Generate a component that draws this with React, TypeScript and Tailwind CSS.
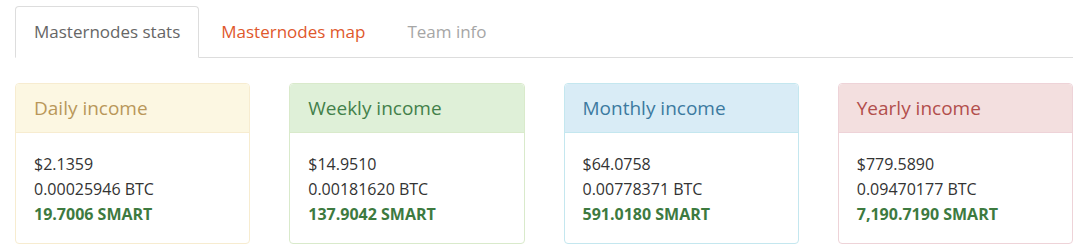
const panels = [
  {
    title: "Daily income",
    usd: "$2.1359",
    btc: "0.00025946 BTC",
    smart: "19.7006 SMART",
    border: "border-[#f7ecd0]",
    head: "bg-[#fcf7e2] text-[#b9975a] border-[#f7ecd0]",
  },
  {
    title: "Weekly income",
    usd: "$14.9510",
    btc: "0.00181620 BTC",
    smart: "137.9042 SMART",
    border: "border-[#d9eacb]",
    head: "bg-[#dff0d8] text-[#43804a] border-[#d9eacb]",
  },
  {
    title: "Monthly income",
    usd: "$64.0758",
    btc: "0.00778371 BTC",
    smart: "591.0180 SMART",
    border: "border-[#c4e7ef]",
    head: "bg-[#d9ecf6] text-[#3c7aa0] border-[#c4e7ef]",
  },
  {
    title: "Yearly income",
    usd: "$779.5890",
    btc: "0.09470177 BTC",
    smart: "7,190.7190 SMART",
    border: "border-[#eed3d8]",
    head: "bg-[#f3dfdf] text-[#b24e4c] border-[#eed3d8]",
  },
]

export default function App() {
  return (
    <div className="w-[1082px] h-[250px] bg-white px-[15px] pt-[6px] font-['Open_Sans',sans-serif]">
      <div className="flex border-b border-[#dddddd] w-[1058px]">
        <div className="-mb-px h-[52px] px-[18px] flex items-center rounded-t border border-[#dddddd] border-b-white bg-white text-[17px] text-[#666666]">
          Masternodes stats
        </div>
        <div className="h-[51px] px-[22px] flex items-center text-[17px] text-[#e0582c]">
          Masternodes map
        </div>
        <div className="h-[51px] px-[20px] flex items-center text-[17px] text-[#a6a6a6]">
          Team info
        </div>
      </div>
      <div className="mt-[25px] grid grid-cols-4 gap-x-[39px] w-[1058px]">
        {panels.map((p) => (
          <div key={p.title} className={`border rounded ${p.border} bg-white`}>
            <div className={`h-[49px] px-[18px] flex items-center border-b rounded-t text-[19px] ${p.head}`}>
              {p.title}
            </div>
            <div className="px-[18px] pt-[19px] pb-[16px] text-[16px] leading-[25px] text-[#333333]">
              <div>{p.usd}</div>
              <div>{p.btc}</div>
              <div className="font-bold text-[#3d7a3f]">{p.smart}</div>
            </div>
          </div>
        ))}
      </div>
    </div>
  )
}
